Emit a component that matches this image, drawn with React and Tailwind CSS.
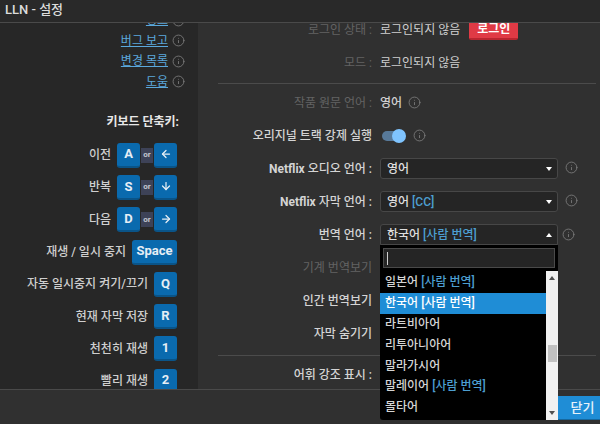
import { Info, ArrowLeft, ArrowDown, ArrowRight } from "lucide-react";

const fontStack = "font-['Roboto','Noto_Sans_CJK_KR',sans-serif]";

const shortcuts = [
  { label: "이전", key: "A", alt: ArrowLeft },
  { label: "반복", key: "S", alt: ArrowDown },
  { label: "다음", key: "D", alt: ArrowRight },
  { label: "재생 / 일시 중지", key: "Space" },
  { label: "자동 일시중지 켜기/끄기", key: "Q" },
  { label: "현재 자막 저장", key: "R" },
  { label: "천천히 재생", key: "1" },
  { label: "빨리 재생", key: "2" },
];

const options = [
  { name: "일본어", human: true },
  { name: "한국어", human: true, active: true },
  { name: "라트비아어" },
  { name: "리투아니아어" },
  { name: "말라가시어" },
  { name: "말레이어", human: true },
  { name: "몰타어" },
];

function InfoIcon({ className = "" }) {
  return <Info size={13} strokeWidth={1.6} className={`shrink-0 text-[#7c7c7c] ${className}`} />;
}

function Key({ children, wide }) {
  return (
    <div
      className={`flex h-[25px] items-center justify-center rounded-[3px] border-b-2 border-[#0a5488] bg-[#0a6aae] text-[13px] font-bold text-[#e6eef5] ${
        wide ? "w-[45px]" : "w-[23px]"
      }`}
    >
      {children}
    </div>
  );
}

function LinkRow({ children }) {
  return (
    <div className="flex h-[20.5px] items-center justify-end gap-[4px] pr-[13px]">
      <a className="text-[12px] text-[#5ba8dc] underline">{children}</a>
      <InfoIcon />
    </div>
  );
}

function ShortcutRow({ item }) {
  const Alt = item.alt;
  return (
    <div className="flex h-[32.3px] items-center justify-end gap-[6px] pr-[21px]">
      <span className="text-[12px] font-medium text-[#cfcfcf]">{item.label}</span>
      <div className="flex items-center gap-[1px]">
        <Key wide={item.key === "Space"}>{item.key}</Key>
        {Alt && (
          <>
            <span className="flex h-[15px] w-[12px] items-center justify-center bg-[#3d4257] text-[8px] font-bold text-[#c5c8d0]">
              or
            </span>
            <Key>
              <Alt size={12} strokeWidth={2.5} />
            </Key>
          </>
        )}
      </div>
    </div>
  );
}

function Row({ label, muted, medium, children }) {
  return (
    <div className="flex h-[33px] items-center gap-[8px]">
      <div
        className={`w-[154px] shrink-0 whitespace-nowrap text-right text-[12px] ${
          muted ? "text-[#636363]" : "text-[#d4d4d4]"
        } ${medium ? "font-medium" : ""}`}
      >
        {label}
      </div>
      {children}
    </div>
  );
}

function Select({ children, open }) {
  return (
    <div
      className={`flex h-[21px] w-[178px] items-center justify-between rounded-[3px] border border-[#474747] bg-[#252525] pl-[6px] pr-[5px] text-[12px] font-medium text-[#dedede] ${
        open ? "rounded-b-none" : ""
      }`}
    >
      <span>{children}</span>
      <span
        className={`h-0 w-0 border-x-[3.5px] border-x-transparent ${
          open ? "border-b-[4px] border-b-white" : "border-t-[4px] border-t-white"
        }`}
      />
    </div>
  );
}

function Human({ children = "[사람 번역]" }) {
  return <span className="text-[#4d9fd1]">{children}</span>;
}

export default function App() {
  return (
    <div className={`relative flex h-[424px] w-[600px] flex-col overflow-hidden bg-[#303030] ${fontStack}`}>
      <header className="flex h-[23px] shrink-0 items-center border-b border-[#4a4a4a] bg-[#292929] pl-[5px] pb-[3px] text-[13px] font-medium text-[#dcdcdc]">
        LLN - 설정
      </header>

      <div className="flex min-h-0 flex-1 overflow-hidden">
        <aside className="w-[198px] shrink-0 overflow-hidden bg-[#272727]">
          <div className="-mt-[13px]">
            <LinkRow>정보</LinkRow>
            <LinkRow>버그 보고</LinkRow>
            <LinkRow>변경 목록</LinkRow>
            <LinkRow>도움</LinkRow>
            <div className="mt-[21px] mb-[8px] pr-[19px] text-right text-[12px] font-bold text-[#e8e8e8]">
              키보드 단축키:
            </div>
            {shortcuts.map((item) => (
              <ShortcutRow item={item} key={item.label} />
            ))}
          </div>
        </aside>

        <main className="min-w-0 flex-1 overflow-hidden pl-[20px] pr-[4px]">
          <div className="-mt-[10px]">
            <Row label="로그인 상태 :" muted>
              <span className="text-[12px] text-[#cfcfcf]">로그인되지 않음</span>
              <button className="ml-[1px] flex h-[20px] w-[49px] items-center justify-center rounded-[2px] border-b-2 border-[#b8252f] bg-[#e03a45] text-[12px] font-bold text-white">
                로그인
              </button>
            </Row>
            <Row label="모드 :" muted>
              <span className="text-[12px] text-[#cfcfcf]">로그인되지 않음</span>
            </Row>
            <div className="mt-[4px] mb-[2px] h-px bg-[#4b4b4b]" />
            <Row label="작품 원문 언어 :" muted>
              <span className="text-[12px] font-medium text-[#cfcfcf]">영어</span>
              <InfoIcon className="-ml-[2px]" />
            </Row>
            <Row label="오리지널 트랙 강제 실행" medium>
              <div className="relative ml-[2px] h-[10px] w-[23px] rounded-full bg-[#587a9a]">
                <span className="absolute -top-[2px] right-[-1px] h-[14px] w-[14px] rounded-full bg-[#7fc4ff]" />
              </div>
              <InfoIcon />
            </Row>
            <Row
              label={
                <>
                  <span className="font-bold">Netflix</span> 오디오 언어 :
                </>
              }
              medium
            >
              <Select>영어</Select>
              <InfoIcon className="-mt-[3px] ml-[-1px]" />
            </Row>
            <Row
              label={
                <>
                  <span className="font-bold">Netflix</span> 자막 언어 :
                </>
              }
              medium
            >
              <Select>
                영어 <Human>[CC]</Human>
              </Select>
              <InfoIcon className="-mt-[3px] ml-[-1px]" />
            </Row>
            <Row label="번역 언어 :" medium>
              <Select open>
                한국어 <Human />
              </Select>
              <InfoIcon className="-ml-[4px]" />
            </Row>
            <Row label="기계 번역보기" muted />
            <Row label="인간 번역보기" medium />
            <Row label="자막 숨기기" medium />
            <div className="mt-[5px] mb-[2px] h-px bg-[#4b4b4b]" />
            <Row label="어휘 강조 표시 :" medium />
          </div>
        </main>
      </div>

      <footer className="flex h-[35px] shrink-0 items-start justify-end border-t border-[#4a4a4a] bg-[#303030] pt-[6px]">
        <button className="flex h-[24px] w-[42px] items-center justify-center border-b border-[#16689e] bg-[#1f8dd6] pl-[7px] text-[13px] font-medium text-[#e6f2fa]">
          닫기
        </button>
      </footer>

      {/* open dropdown */}
      <div className="absolute left-[380px] top-[245px] flex h-[175px] w-[178px] flex-col rounded-b-[3px] bg-black">
        <div className="mx-[3px] mt-[3px] mb-[3px] flex h-[20px] shrink-0 items-center border border-[#4a4a4a] bg-[#252525] pl-[3px]">
          <span className="h-[13px] w-px bg-[#d0d0d0]" />
        </div>
        <div className="flex min-h-0 flex-1">
          <ul className="min-w-0 flex-1 pt-[1px]">
            {options.map((opt) => (
              <li
                key={opt.name}
                className={`flex h-[20.8px] items-center gap-[3px] pl-[5px] text-[12px] font-medium ${
                  opt.active ? "bg-[#1f8dd6] text-white" : "text-[#d4d4d4]"
                }`}
              >
                {opt.name}
                {opt.human && <span className={opt.active ? "text-white" : "text-[#4d9fd1]"}>[사람 번역]</span>}
              </li>
            ))}
          </ul>
          <div className="flex w-[12px] shrink-0 flex-col items-center bg-[#f1f1f1] py-[5px]">
            <span className="h-0 w-0 border-x-[3px] border-b-[4px] border-x-transparent border-b-[#505050]" />
            <span className="mt-[65px] h-[17px] w-[9px] bg-[#c1c1c1]" />
            <span className="mt-auto h-0 w-0 border-x-[3px] border-t-[4px] border-x-transparent border-t-[#505050]" />
          </div>
        </div>
      </div>
    </div>
  );
}
